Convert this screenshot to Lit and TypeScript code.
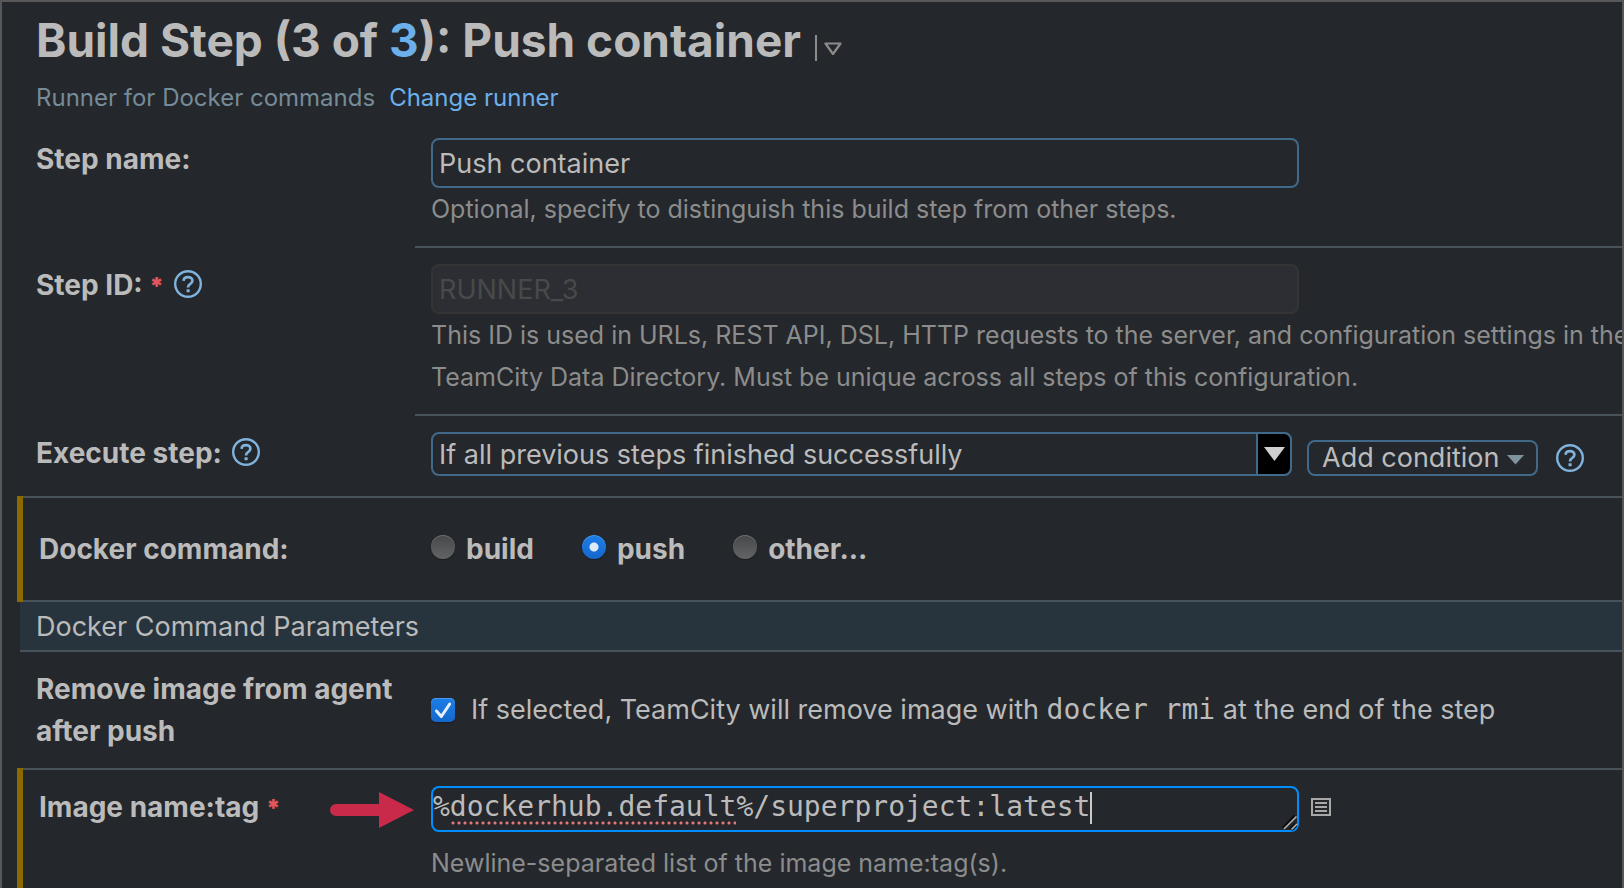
import { LitElement, html, css } from "lit";
import { customElement, property, state } from "lit/decorators.js";

@customElement("help-icon")
class HelpIcon extends LitElement {
  @property() topic = "";

  static styles = css`
    :host {
      display: inline-flex;
      flex: none;
    }
    .help {
      display: block;
      width: 28px;
      height: 28px;
      padding: 0;
      border: 0;
      background: none;
      color: #7fb2dc;
      cursor: pointer;
    }
    .glyph {
      display: block;
      width: 28px;
      height: 28px;
    }
  `;

  render() {
    return html`
      <button class="help" type="button" aria-label="Help: ${this.topic}">
        <svg class="glyph" viewBox="0 0 28 28" fill="none" stroke="currentColor" aria-hidden="true">
          <circle cx="14" cy="14" r="12.8" stroke-width="2.4" />
          <path d="M9.6 10.9C9.700 8.600 11.500 7.200 14 7.200c2.500 0 4.400 1.400 4.400 3.600 0 1.500-.8 2.400-2.300 3.300-1.500.9-2 1.500-2 2.800v.6" stroke-width="2.7" />
          <rect x="12.500" y="19.200" width="3.200" height="3" rx=".6" fill="currentColor" stroke="none" />
        </svg>
      </button>
    `;
  }
}

@customElement("app-root")
class AppRoot extends LitElement {
  @state() private command = "push";

  static styles = css`
    :host {
      display: block;
      --line: #48525a;
      --control: #41698a;
      --text: #bbbbbb;
      --muted: #8c8c8c;
      --gold: #8b6a00;
      --link: #6bb0ea;
      color: var(--text);
      font: 400 27px/42px Inter, "Liberation Sans", sans-serif;
    }
    *,
    *::before {
      box-sizing: border-box;
    }
    a {
      color: var(--link);
      text-decoration: none;
    }
    .page {
      display: flex;
      flex-direction: column;
      min-height: 100vh;
      overflow: hidden;
      border: 2px solid #575757;
      padding: 10px 0 0 15px;
      background: #24272b;
    }
    .head {
      padding-left: 19px;
      margin-bottom: 3px;
    }
    .title-row {
      display: flex;
      align-items: center;
      gap: 14px;
      margin-bottom: 9px;
    }
    .title {
      margin: 0;
      font-size: 46px;
      line-height: 56px;
      font-weight: 700;
    }
    .menu {
      display: flex;
      align-items: center;
      height: 26px;
      margin-top: 16px;
      padding: 0 0 0 7px;
      border: 0;
      border-left: 2px solid var(--muted);
      background: none;
      color: var(--muted);
    }
    .menu-icon {
      display: block;
      width: 18px;
      height: 14px;
    }
    .runner {
      display: flex;
      gap: 14px;
      margin: 0;
      font-size: 24px;
      color: #768b98;
    }
    .row {
      display: grid;
      grid-template-columns: 395px minmax(0, 1fr);
      margin-left: 3px;
    }
    .row.marked {
      grid-template-columns: 392px minmax(0, 1fr);
      margin-left: 0;
      padding: 2px 0 0 6px;
      background:
        linear-gradient(var(--gold), var(--gold)) 0 0 / 6px 100% no-repeat,
        linear-gradient(var(--line), var(--line)) 0 0 / 100% 2px no-repeat,
        linear-gradient(var(--line), var(--line)) 0 100% / 100% 2px no-repeat;
    }
    .row.last {
      flex: 1;
      background:
        linear-gradient(var(--gold), var(--gold)) 0 0 / 6px 100% no-repeat,
        linear-gradient(var(--line), var(--line)) 0 0 / 100% 2px no-repeat;
    }
    .name {
      display: flex;
      align-items: flex-start;
      gap: 10px;
      padding: 16px 0 0 16px;
      font-size: 28px;
      font-weight: 700;
    }
    .name > help-icon {
      margin-top: 6px;
    }
    .star {
      color: #e5565c;
      font-size: 24px;
      font-weight: 900;
    }
    .field {
      min-width: 0;
      padding: 16px 0 16px 16px;
    }
    .field.ruled {
      border-bottom: 2px solid var(--line);
    }
    .hint {
      margin: 0;
      color: var(--muted);
      font-size: 25px;
      white-space: nowrap;
    }
    .text {
      display: block;
      width: 100%;
      max-width: 868px;
      height: 50px;
      padding: 0 6px;
      border: 2px solid var(--control);
      border-radius: 8px;
      outline: none;
      background: transparent;
      color: inherit;
      font: inherit;
    }
    .text:disabled {
      border-color: #343434;
      background: #2c2e33;
      color: #48494b;
    }
    .execute {
      display: flex;
      align-items: flex-end;
      gap: 15px;
      padding-bottom: 20px;
    }
    .execute > help-icon {
      margin: 0 0 4px 3px;
    }
    .picker {
      display: grid;
      flex: 0 1 861px;
      height: 44px;
    }
    .picker > * {
      grid-area: 1 / 1;
    }
    .choice {
      appearance: none;
      width: 100%;
      height: 44px;
      padding: 2px 44px 0 6px;
      border: 2px solid var(--control);
      border-radius: 8px;
      outline: none;
      background: transparent;
      color: inherit;
      font: inherit;
      line-height: 38px;
    }
    .drop {
      display: flex;
      align-items: center;
      justify-content: center;
      justify-self: end;
      width: 36px;
      height: 44px;
      border: 2px solid var(--control);
      border-radius: 0 8px 8px 0;
      background: #000;
      pointer-events: none;
    }
    .drop-icon {
      width: 21px;
      height: 14px;
    }
    .add {
      display: flex;
      align-items: center;
      gap: 8px;
      height: 36px;
      padding: 0 12px 0 13px;
      border: 2px solid var(--control);
      border-radius: 8px;
      background: none;
      color: inherit;
      font: inherit;
      line-height: 32px;
      white-space: nowrap;
    }
    .add-icon {
      width: 17px;
      height: 10px;
      margin-top: 4px;
    }
    .centered {
      padding-top: 30px;
      padding-bottom: 32px;
    }
    .radios {
      display: flex;
      gap: 48px;
      margin: 0;
      border: 0;
      font-size: 28px;
      font-weight: 700;
    }
    .option {
      display: flex;
      align-items: center;
      gap: 11px;
    }
    .radio {
      appearance: none;
      width: 24px;
      height: 24px;
      margin: 0 0 4px;
      border-radius: 50%;
      background: linear-gradient(#47484a, #636466);
      box-shadow: inset 0 1px 0 #6c6d6f, 0 1px 1px #1a1c1f;
    }
    .radio:checked {
      background: radial-gradient(circle, #dfeaf8 4px, transparent 5px), linear-gradient(#1c7ee8, #1567cb);
      box-shadow: inset 0 1px 0 #4b98ee, 0 1px 1px #1a1c1f;
    }
    .section {
      margin: 0 0 0 3px;
      padding: 4px 0 2px 16px;
      border-bottom: 2px solid var(--line);
      background: #27343d;
      font-size: 27px;
      font-weight: 400;
    }
    .wrap {
      padding: 16px 8px 16px 16px;
    }
    .tick {
      display: flex;
      align-items: center;
      gap: 16px;
    }
    .tick-box {
      display: grid;
      flex: none;
      width: 24px;
      height: 24px;
    }
    .tick-box > * {
      grid-area: 1 / 1;
    }
    .check {
      appearance: none;
      width: 24px;
      height: 24px;
      margin: 0;
      border-radius: 5px;
      background: linear-gradient(#1c7ee8, #1567cb);
      box-shadow: inset 0 1px 0 #4b98ee, 0 1px 1px #1a1c1f;
    }
    .tick-icon {
      width: 24px;
      height: 24px;
      pointer-events: none;
      visibility: hidden;
    }
    .check:checked + .tick-icon {
      visibility: visible;
    }
    .code {
      font: 28px/38px "DejaVu Sans Mono", monospace;
    }
    .pointer {
      width: 84px;
      height: 36px;
      margin: 6px 1px 0 auto;
    }
    .image-line {
      display: flex;
      align-items: center;
      gap: 12px;
      margin-bottom: 10px;
    }
    .editor {
      display: grid;
      flex: 0 1 868px;
      height: 46px;
      font: 28px/38px "DejaVu Sans Mono", monospace;
    }
    .editor > * {
      grid-area: 1 / 1;
    }
    .area {
      display: block;
      width: 100%;
      height: 46px;
      padding: 0;
      border: 2px solid #008eff;
      border-radius: 8px;
      outline: none;
      background: transparent;
      color: inherit;
      font: inherit;
      resize: none;
      overflow: hidden;
      white-space: pre;
    }
    .spelling {
      align-self: end;
      width: 17ch;
      height: 4px;
      margin: 0 0 7px calc(1ch + 2px);
      background: radial-gradient(circle at 3px 2px, #e07878 1px, transparent 2px) 0 0 / 6px 4px;
      pointer-events: none;
    }
    .caret {
      width: 2px;
      height: 32px;
      margin: 6px 0 0 calc(39ch + 2px);
      background: #c9c9c9;
      pointer-events: none;
    }
    .grip {
      place-self: end;
      width: 16px;
      height: 16px;
      margin: 0 1px 1px 0;
      pointer-events: none;
    }
    .list {
      flex: none;
      padding: 0;
      border: 0;
      background: none;
      color: #a8a8a8;
    }
    .list-icon {
      display: block;
      width: 20px;
      height: 18px;
      margin-bottom: 4px;
    }
  `;

  render() {
    return html`
      <main class="page">
        <header class="head">
          <div class="title-row">
            <h1 class="title">Build Step (3 of <a href="#steps">3</a>): Push container</h1>
            <button class="menu" type="button" aria-label="Step menu">
              <svg class="menu-icon" viewBox="0 0 18 14" fill="none" stroke="currentColor" stroke-width="2.2" stroke-linejoin="round" aria-hidden="true">
                <path d="M1.500 2.500h15L9 13z" />
              </svg>
            </button>
          </div>
          <p class="runner"><span>Runner for Docker commands</span><a href="#runner">Change runner</a></p>
        </header>

        <div class="row">
          <div class="name"><label for="step-name">Step name:</label></div>
          <div class="field ruled">
            <input class="text" id="step-name" type="text" .value=${"Push container"} />
            <p class="hint">Optional, specify to distinguish this build step from other steps.</p>
          </div>
        </div>

        <div class="row">
          <div class="name">
            <label for="step-id">Step ID: <span class="star">*</span></label>
            <help-icon topic="Step ID"></help-icon>
          </div>
          <div class="field ruled">
            <input class="text" id="step-id" type="text" disabled .value=${"RUNNER_3"} />
            <p class="hint">
              This ID is used in URLs, REST API, DSL, HTTP requests to the server, and configuration settings in the<br />TeamCity Data Directory. Must be unique across all steps of this configuration.
            </p>
          </div>
        </div>

        <div class="row">
          <div class="name">
            <label for="execute">Execute step:</label>
            <help-icon topic="Execute step"></help-icon>
          </div>
          <div class="field execute">
            <div class="picker">
              <select class="choice" id="execute">
                <option>If all previous steps finished successfully</option>
              </select>
              <span class="drop">
                <svg class="drop-icon" viewBox="0 0 21 14" aria-hidden="true"><path d="M0 0h21L10.500 14z" fill="#cfcfcf" /></svg>
              </span>
            </div>
            <button class="add" type="button">
              Add condition
              <svg class="add-icon" viewBox="0 0 17 10" aria-hidden="true"><path d="M0 0h17L8.500 9.500z" fill="#7f939f" /></svg>
            </button>
            <help-icon topic="Execution conditions"></help-icon>
          </div>
        </div>

        <div class="row marked">
          <div class="name centered" id="command">Docker command:</div>
          <div class="field centered radios" role="radiogroup" aria-labelledby="command">
            ${["build", "push", "other"].map(
              (value) => html`
                <label class="option">
                  <input
                    class="radio"
                    type="radio"
                    name="command"
                    value=${value}
                    .checked=${this.command === value}
                    @change=${() => (this.command = value)}
                  />
                  <span>${value === "other" ? "other..." : value}</span>
                </label>
              `
            )}
          </div>
        </div>

        <h2 class="section">Docker Command Parameters</h2>

        <div class="row">
          <div class="name wrap"><label for="remove">Remove image from agent after push</label></div>
          <div class="field tick">
            <span class="tick-box">
              <input class="check" id="remove" type="checkbox" checked />
              <svg class="tick-icon" viewBox="0 0 24 24" fill="none" stroke="#e6f0fb" stroke-width="3" stroke-linecap="round" stroke-linejoin="round" aria-hidden="true">
                <path d="M5.500 13l4.800 5.500L18.700 6" />
              </svg>
            </span>
            <label for="remove">If selected, TeamCity will remove image with <span class="code">docker rmi</span> at the end of the step</label>
          </div>
        </div>

        <div class="row marked last">
          <div class="name">
            <label for="image">Image name:tag <span class="star">*</span></label>
            <svg class="pointer" viewBox="0 0 84 36" fill="#c92a4a" aria-hidden="true">
              <path d="M6 12h43V0l35 18-35 18V24H6a6 6 0 0 1 0-12z" />
            </svg>
          </div>
          <div class="field">
            <div class="image-line">
              <div class="editor">
                <textarea class="area" id="image" rows="1" spellcheck="false" .value=${"%dockerhub.default%/superproject:latest"}></textarea>
                <span class="spelling"></span>
                <span class="caret"></span>
                <svg class="grip" viewBox="0 0 16 16" fill="none" aria-hidden="true">
                  <path d="M1.500 13.500L13.500 1M9 14.500l5-5" stroke="#0b0c0d" stroke-width="4" />
                  <path d="M2 14L14.500 1.500M9.500 14.500l5.500-5.500" stroke="#b5b5b5" stroke-width="1.600" />
                </svg>
              </div>
              <button class="list" type="button" aria-label="Choose a value">
                <svg class="list-icon" viewBox="0 0 20 18" fill="none" stroke="currentColor" stroke-width="2" aria-hidden="true">
                  <path d="M1 1h18v16H1zM4 5h12M4 9h12M4 13h12" />
                </svg>
              </button>
            </div>
            <p class="hint">Newline-separated list of the image name:tag(s).</p>
          </div>
        </div>
      </main>
    `;
  }
}
